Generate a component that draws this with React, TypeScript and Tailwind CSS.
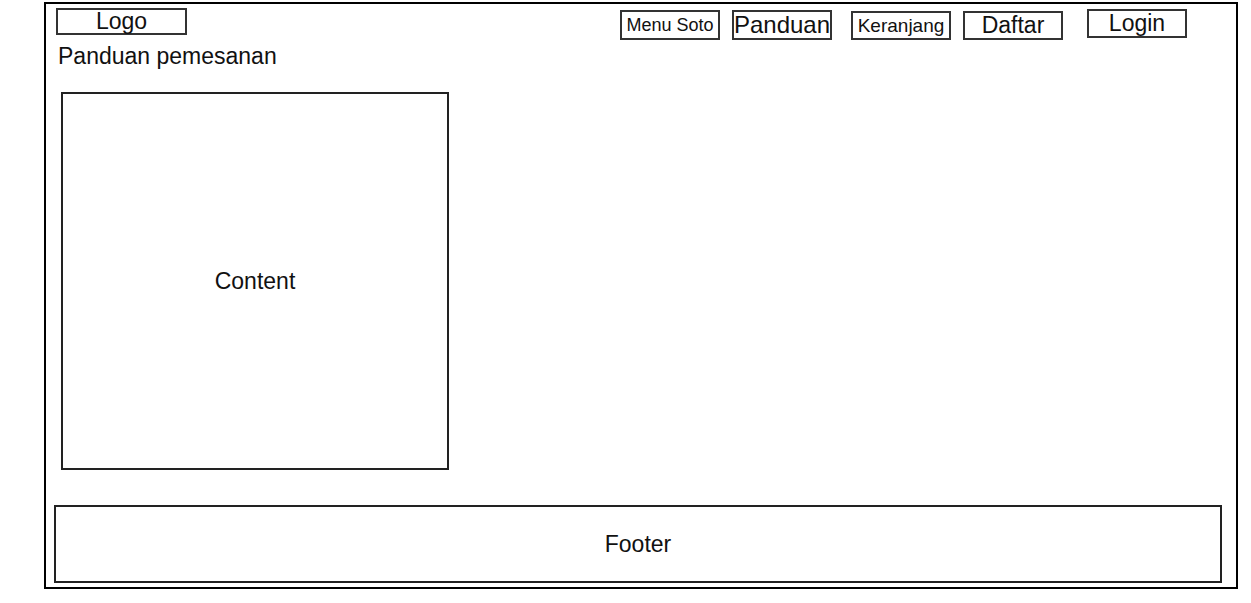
export default function App() {
  const font = { fontFamily: '"Liberation Sans", Arial, sans-serif' };
  return (
    <div className="w-[1251px] h-[603px] bg-white text-[#111]" style={font}>
      <div className="ml-[44px] mt-[2px] w-[1194px] h-[587px] border-2 border-black box-border">
        <div className="flex h-[38px] items-start">
          <div className="ml-[10px] mt-[4px] w-[131px] h-[27px] border-2 border-[#333] flex items-center justify-center text-[23px] leading-none">
            Logo
          </div>
          <div className="ml-[433px] mt-[6px] w-[100px] h-[30px] border-2 border-[#333] flex items-center justify-center text-[18px] leading-none">
            Menu Soto
          </div>
          <div className="ml-[12px] mt-[6px] w-[100px] h-[30px] border-2 border-[#333] flex items-center justify-center text-[24px] leading-none">
            Panduan
          </div>
          <div className="ml-[19px] mt-[7px] w-[100px] h-[29px] border-2 border-[#333] flex items-center justify-center text-[19px] leading-none">
            Keranjang
          </div>
          <div className="ml-[12px] mt-[7px] w-[100px] h-[29px] border-2 border-[#333] flex items-center justify-center text-[23px] leading-none">
            Daftar
          </div>
          <div className="ml-[24px] mt-[5px] w-[100px] h-[29px] border-2 border-[#333] flex items-center justify-center text-[23px] leading-none">
            Login
          </div>
        </div>
        <div className="ml-[12px] mt-[3px] text-[23px] leading-none">Panduan pemesanan</div>
        <div className="ml-[15px] mt-[24px] w-[388px] h-[378px] border-2 border-[#222] flex items-center justify-center text-[23px] leading-none">
          Content
        </div>
        <div className="ml-[8px] mt-[35px] w-[1168px] h-[78px] border-2 border-[#222] flex items-center justify-center text-[23px] leading-none">
          Footer
        </div>
      </div>
    </div>
  );
}
